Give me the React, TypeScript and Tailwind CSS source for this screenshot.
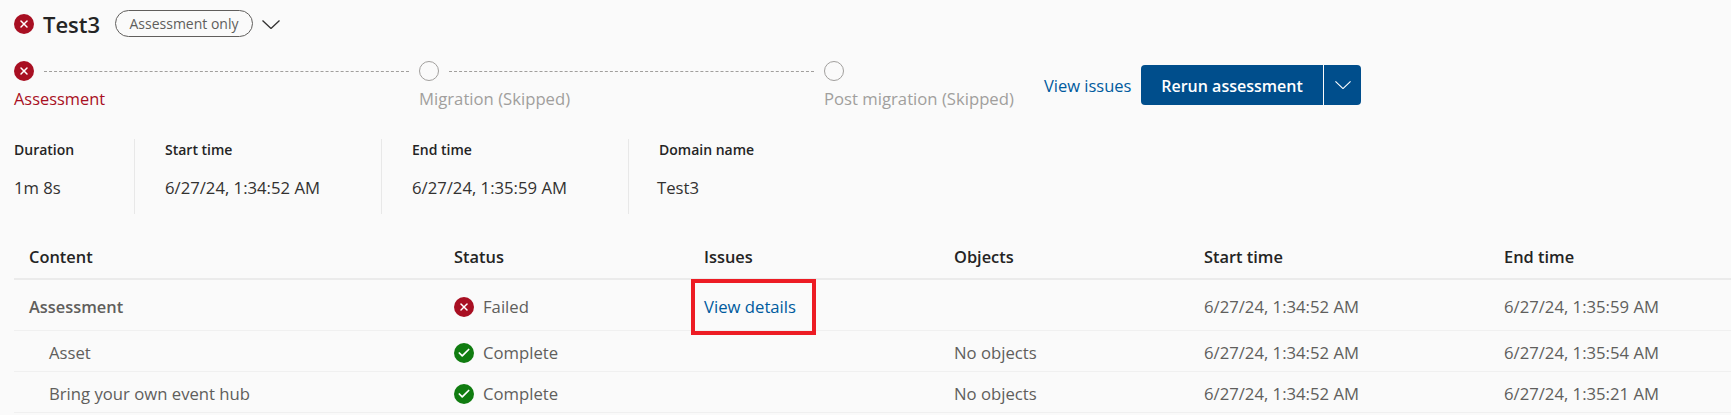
import { Check, X } from 'lucide-react';

const font = "font-['Open_Sans',sans-serif]";

function FailIcon() {
  return (
    <span className="w-5 h-5 shrink-0 rounded-full bg-[#a80f22] flex items-center justify-center">
      <X className="w-3 h-3 text-white" strokeWidth={3} />
    </span>
  );
}

function OkIcon() {
  return (
    <span className="w-5 h-5 shrink-0 rounded-full bg-[#107c10] flex items-center justify-center">
      <Check className="w-3.5 h-3.5 text-white" strokeWidth={3} />
    </span>
  );
}

function Chevron({ className }: { className: string }) {
  return (
    <svg className={className} viewBox="0 0 18 9" fill="none" stroke="currentColor" strokeWidth="1.3">
      <path d="M0.5 0.5 L9 8.5 L17.5 0.5" />
    </svg>
  );
}

function Step({ label, failed, last }: { label: string; failed?: boolean; last?: boolean }) {
  return (
    <div className={last ? 'w-[205px]' : 'w-[405px]'}>
      <div className="flex items-center h-5">
        {failed ? <FailIcon /> : <span className="w-5 h-5 shrink-0 rounded-full border border-[#a19f9d]" />}
        {!last && <div className="mx-2.5 flex-1 border-t border-dashed border-[#a19f9d]" />}
      </div>
      <div className={`mt-1.5 leading-6 whitespace-nowrap ${failed ? 'text-[16.4px] text-[#a80f22]' : 'text-[16.7px] text-[#a19f9d]'}`}>{label}</div>
    </div>
  );
}

function Detail({ label, value, width, first, valueClass }: { label: string; value: string; width: string; first?: boolean; valueClass?: string }) {
  return (
    <div className={`${width} h-[75px] ${first ? '' : 'border-l border-[#e8e8e8] pl-[30px]'}`}>
      <div className="mt-px text-[14px] leading-5 font-semibold text-[#242424]">{label}</div>
      <div className={`mt-4 text-[16.7px] leading-6 text-[#323130] ${valueClass ?? ''}`}>{value}</div>
    </div>
  );
}

const gridCols = 'grid grid-cols-[425px_250px_250px_250px_300px_1fr] pl-[15px] items-center';

function Row({ name, status, issues, objects, start, end, height, bold }: {
  name: string; status: 'failed' | 'complete'; issues?: boolean; objects?: string; start: string; end: string; height: string; bold?: boolean;
}) {
  return (
    <div className={`${gridCols} ${height} pt-1 border-b border-[#f0f0f0] text-[16.7px] leading-6 text-[#605e5c]`}>
      <div className={bold ? 'font-semibold text-[16.4px]' : 'pl-5'}>{name}</div>
      <div className="flex items-center gap-[9px]">
        {status === 'failed' ? <FailIcon /> : <OkIcon />}
        <span>{status === 'failed' ? 'Failed' : 'Complete'}</span>
      </div>
      <div>
        {issues && (
          <span className="relative inline-block text-[#005a9e]">
            View details
            <span className="absolute -left-[13px] -right-[20px] -top-[16px] -bottom-[16px] border-4 border-[#ed1c24]" />
          </span>
        )}
      </div>
      <div>{objects}</div>
      <div>{start}</div>
      <div>{end}</div>
    </div>
  );
}

export default function App() {
  return (
    <div className={`${font} w-[1731px] h-[415px] overflow-hidden bg-[#fafafa] pl-[14px] pt-[10px]`}>
      <div className="flex items-center h-[27px]">
        <FailIcon />
        <h1 className="ml-[9px] w-[56px] text-[22px] leading-8 font-semibold text-[#242424]">Test3</h1>
        <span className="ml-4 w-[138px] h-[27px] rounded-full border border-[#605e5c] flex items-center justify-center text-[14px] text-[#605e5c]">Assessment only</span>
        <Chevron className="ml-[9px] mt-px w-[18px] h-[9px] text-[#323130]" />
      </div>

      <div className="mt-6 flex items-start">
        <Step label="Assessment" failed />
        <Step label="Migration (Skipped)" />
        <Step label="Post migration (Skipped)" last />
        <a className="ml-[15px] mt-[13px] w-[87px] text-[16.5px] leading-6 text-[#005a9e] whitespace-nowrap">View issues</a>
        <div className="ml-[10px] mt-1 flex h-10 text-white">
          <button className="w-[182px] pt-px rounded-l bg-[#004e8c] text-[16px] font-semibold">Rerun assessment</button>
          <button className="w-[37px] ml-px rounded-r bg-[#004e8c] flex items-center justify-center">
            <Chevron className="w-4 h-2" />
          </button>
        </div>
      </div>

      <div className="mt-7 flex">
        <Detail first width="w-[120px]" label="Duration" value="1m 8s" />
        <Detail width="w-[247px]" label="Start time" value="6/27/24, 1:34:52 AM" />
        <Detail width="w-[247px]" label="End time" value="6/27/24, 1:35:59 AM" />
        <Detail width="w-[300px]" valueClass="-ml-[2px]" label="Domain name" value="Test3" />
      </div>

      <div className="mt-[23px]">
        <div className={`${gridCols} h-[43px] border-b-2 border-[#ebebeb] text-[16.4px] font-semibold text-[#242424]`}>
          <div>Content</div>
          <div>Status</div>
          <div>Issues</div>
          <div>Objects</div>
          <div>Start time</div>
          <div>End time</div>
        </div>
        <Row bold name="Assessment" status="failed" issues start="6/27/24, 1:34:52 AM" end="6/27/24, 1:35:59 AM" height="h-[51px]" />
        <Row name="Asset" status="complete" objects="No objects" start="6/27/24, 1:34:52 AM" end="6/27/24, 1:35:54 AM" height="h-[41px]" />
        <Row name="Bring your own event hub" status="complete" objects="No objects" start="6/27/24, 1:34:52 AM" end="6/27/24, 1:35:21 AM" height="h-[41px]" />
      </div>
    </div>
  );
}
